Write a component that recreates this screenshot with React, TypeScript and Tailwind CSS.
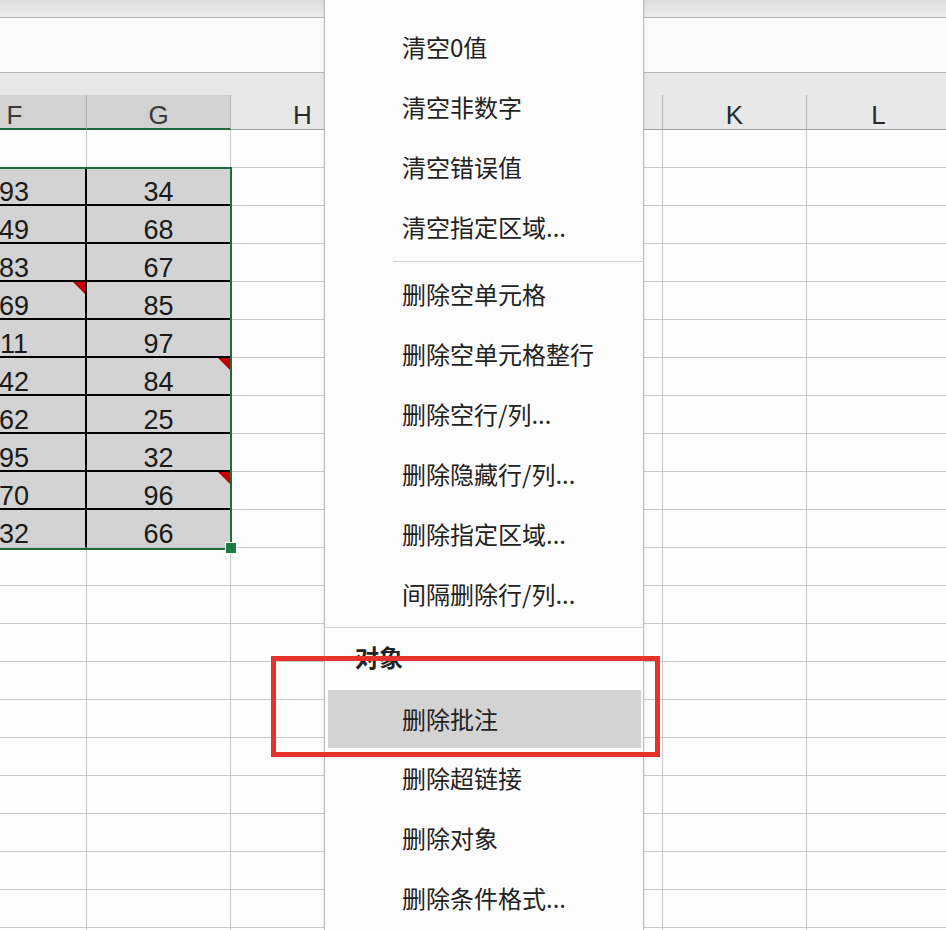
import React from "react";

const fVals = [93, 49, 83, 69, 11, 42, 62, 95, 70, 32];
const gVals = [34, 68, 67, 85, 97, 84, 25, 32, 96, 66];
const fComment = [3];
const gComment = [5, 8];
const cols = ["F", "G", "H", "I", "J", "K", "L"];
const hidden = ["I", "J"];

function Tri() {
  return (
    <svg className="absolute top-0 right-0 w-[12px] h-[12px]" viewBox="0 0 12 12">
      <polygon points="0,0 12,0 12,12" fill="#c00000" />
    </svg>
  );
}

function HeaderRow() {
  return (
    <div className="flex h-[57px] bg-[#e8e8e8]">
      {cols.map((c) => {
        const sel = c === "F" || c === "G";
        return (
          <div key={c} className="w-[144px] flex flex-col">
            <div className="h-[22px]" />
            <div
              className={
                sel
                  ? "h-[35px] flex justify-center items-start pt-[7px] bg-[#d2d2d2] border-r border-[#b3b3b3] border-b-2 border-b-[#1e6b40] text-[26px] leading-none text-[#3a3a3a]"
                  : "h-[35px] flex justify-center items-start pt-[7px] border-r border-[#b3b3b3] border-b border-b-[#a5a5a5] text-[26px] leading-none text-[#2a2a2a]"
              }
            >
              {hidden.includes(c) ? "" : c}
            </div>
          </div>
        );
      })}
    </div>
  );
}

function BodyRow({ idx }: { idx: number }) {
  const d = idx - 1;
  const isData = d >= 0 && d < 10;
  const lastData = d === 9;
  return (
    <div className="flex h-[38px]">
      {cols.map((c) => {
        if (isData && (c === "F" || c === "G")) {
          const v = c === "F" ? fVals[d] : gVals[d];
          const hasTri = c === "F" ? fComment.includes(d) : gComment.includes(d);
          const cls =
            "relative w-[144px] h-[38px] flex justify-center items-start pt-[11px] bg-[#d3d3d3] text-[27px] leading-none text-[#1a1a1a] " +
            (lastData ? "border-b border-b-[#c9c9c9] " : "border-b-2 border-b-black ") +
            (c === "F" ? "border-r-2 border-r-black" : "border-r border-r-[#c9c9c9]");
          return (
            <div key={c} className={cls}>
              {v}
              {hasTri && <Tri />}
            </div>
          );
        }
        return <div key={c} className="w-[144px] h-[38px] border-r border-b border-[#c9c9c9]" />;
      })}
    </div>
  );
}

const topItems = ["清空0值", "清空非数字", "清空错误值", "清空指定区域..."];
const midItems = ["删除空单元格", "删除空单元格整行", "删除空行/列...", "删除隐藏行/列...", "删除指定区域...", "间隔删除行/列..."];
const botItems = ["删除超链接", "删除对象", "删除条件格式..."];

function Item({ label }: { label: string }) {
  return <div className="h-[60px] flex items-center pl-[77px] whitespace-nowrap">{label}</div>;
}

export default function App() {
  return (
    <div className="relative w-[946px] h-[930px] overflow-hidden bg-[#fdfdfd] font-['Liberation_Sans','Noto_Sans_CJK_SC',sans-serif]">
      <div className="h-[18px] bg-gradient-to-b from-[#dedede] to-[#ececec] border-b border-[#b4b4b4]" />
      <div className="h-[55px] bg-[#fbfbfb] border-b border-[#b6b6b6]" />
      <div className="relative -ml-[57px] w-[1008px]">
        <HeaderRow />
        <div className="relative">
          {Array.from({ length: 22 }).map((_, i) => (
            <BodyRow key={i} idx={i} />
          ))}
          <div className="absolute left-0 top-[37px] w-[289px] h-[383px] border-2 border-[#1e6b40]" />
          <div className="absolute left-[282px] top-[412px] w-[12px] h-[12px] bg-[#1e7b45] border border-white" />
        </div>
      </div>

      <div className="absolute left-[324px] top-0 w-[320px] h-[930px] bg-[#fcfcfc] border-x border-[#bcbcbc] shadow-[0_0_4px_rgba(0,0,0,0.10)] font-['Noto_Sans_CJK_SC',sans-serif] text-[24px] text-[#222]">
        <div className="flex flex-col pt-[17px]">
          {topItems.map((t) => (
            <Item key={t} label={t} />
          ))}
          <div className="mt-[4px] mb-[2px] ml-[68px] h-px bg-[#cfcfcf]" />
          {midItems.map((t) => (
            <Item key={t} label={t} />
          ))}
          <div className="mt-[3px] h-px bg-[#cfcfcf]" />
          <div className="h-[62px] flex items-center pl-[30px] pb-[4px] font-bold">对象</div>
          <div className="h-[58px] ml-[3px] mr-[2px] bg-[#d3d3d3] flex items-center pl-[74px]">删除批注</div>
          {botItems.map((t) => (
            <Item key={t} label={t} />
          ))}
        </div>
      </div>

      <div className="absolute left-[271px] top-[656px] w-[389px] h-[101px] border-[5px] border-[#e5322d]" />
    </div>
  );
}
